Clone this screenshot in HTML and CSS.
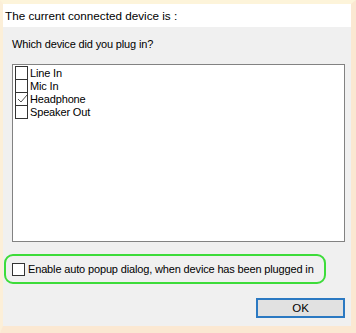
FILE: index.html
```html
<!DOCTYPE html>
<html>
<head>
<meta charset="utf-8">
<link rel="stylesheet" href="styles.css">
</head>
<body>
<div class="frame">
  <div class="header">The current connected device is :</div>
  <div class="content">
    <div class="question">Which device did you plug in?</div>
    <div class="listbox">
      <div class="item"><span class="box"></span><span class="label">Line In</span></div>
      <div class="item"><span class="box"></span><span class="label">Mic In</span></div>
      <div class="item"><span class="box checked"><svg width="12" height="12" viewBox="0 0 12 12"><path d="M2 6 L5 9 L11 2" fill="none" stroke="#555" stroke-width="1"/></svg></span><span class="label">Headphone</span></div>
      <div class="item last"><span class="box"></span><span class="label">Speaker Out</span></div>
    </div>
    <div class="highlight">
      <span class="box single"></span><span class="label">Enable auto popup dialog, when device has been plugged in</span>
    </div>
    <div class="buttons">
      <button class="ok">OK</button>
    </div>
  </div>
</div>
</body>
</html>
```
FILE: styles.css
```css
html, body {
  margin: 0;
  padding: 0;
}
body {
  width: 356px;
  height: 333px;
  background: #fbe8d2;
  font-family: "Liberation Sans", Arial, sans-serif;
  font-size: 11px;
  letter-spacing: -0.15px;
  color: #000;
  overflow: hidden;
}
.frame {
  box-sizing: border-box;
  width: 356px;
  height: 333px;
  border-style: solid;
  border-color: #fdf4da #fbe8d2 #fbe8d2 #fcefd8;
  border-width: 4px 5px 7px 3px;
  display: flex;
  flex-direction: column;
}
.header {
  background: #fff;
  height: 23px;
  line-height: 23px;
  padding-left: 2px;
  box-sizing: border-box;
  font-size: 11.7px;
  letter-spacing: 0;
}
.content {
  flex: 1;
  background: #f0f0f0;
  display: flex;
  flex-direction: column;
}
.question {
  margin: 10px 0 0 9px;
  line-height: 15px;
}
.listbox {
  margin: 12px 6px 0 9px;
  height: 178px;
  box-sizing: border-box;
  border: 1px solid #828282;
  background: #fff;
  padding: 1px 0 0 2px;
}
.item {
  display: flex;
  align-items: flex-start;
  height: 13px;
}
.box {
  box-sizing: border-box;
  width: 13px;
  height: 14px;
  border: 1px solid #333;
  background: #fff;
  display: block;
  flex: none;
}
.box svg {
  display: block;
}
.item .label {
  line-height: 14px;
  margin-left: 2px;
}
.highlight {
  margin: 12px 0 0 1px;
  width: 322px;
  height: 30px;
  box-sizing: border-box;
  border: 2px solid #3ddc3a;
  border-radius: 9px;
  display: flex;
  align-items: center;
  padding-left: 6px;
}
.box.single {
  height: 13px;
}
.highlight .label {
  margin-left: 3px;
  white-space: nowrap;
}
.buttons {
  display: flex;
  justify-content: flex-end;
  margin: 14px 6px 0 0;
}
.ok {
  width: 89px;
  height: 20px;
  box-sizing: border-box;
  border: 2px solid #2b79c2;
  background: #e1e1e1;
  font-family: "Liberation Sans", Arial, sans-serif;
  font-size: 11.5px;
  color: #000;
  padding: 0;
  margin: 0;
}
```
